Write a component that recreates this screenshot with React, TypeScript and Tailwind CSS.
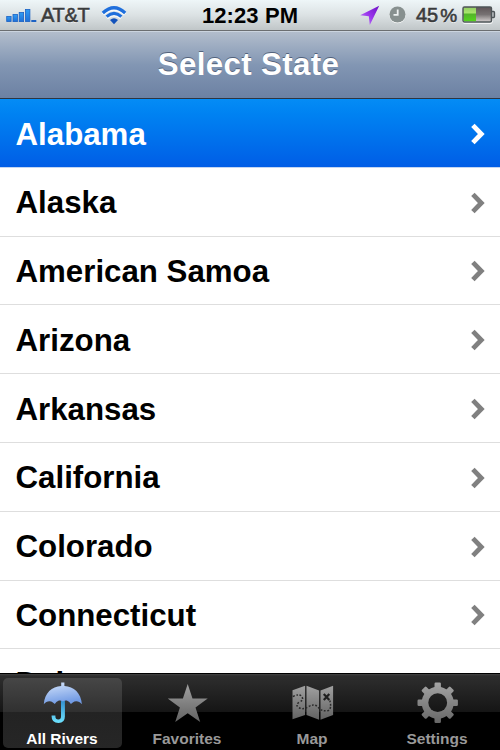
import React, { useState } from 'react';

const STATES = [
  'Alabama',
  'Alaska',
  'American Samoa',
  'Arizona',
  'Arkansas',
  'California',
  'Colorado',
  'Connecticut',
  'Delaware',
];

const SignalIcon = () => (
  <svg width="32" height="16" viewBox="0 0 32 16" className="relative top-px shrink-0">
    <defs>
      <linearGradient id="signal" x1="0" y1="0" x2="0" y2="1">
        <stop offset="0" stopColor="#2f9df4" />
        <stop offset="1" stopColor="#1d6fd8" />
      </linearGradient>
    </defs>
    <g fill="url(#signal)" stroke="#1c62c4" strokeWidth="0.8">
      <rect x="0.7" y="8.4" width="4.4" height="5.2" />
      <rect x="7" y="6.4" width="4.4" height="7.2" />
      <rect x="13.2" y="4.4" width="4.4" height="9.2" />
      <rect x="19.5" y="1.4" width="4.4" height="12.2" />
    </g>
    <rect x="25.3" y="12" width="5" height="2" fill="#1c62c4" />
  </svg>
);

const WifiIcon = () => (
  <svg width="26" height="20" viewBox="0 0 26 20" className="relative top-px shrink-0">
    <g transform="translate(0 1)" fill="none" stroke="#ffffff" strokeWidth="3.2" opacity="0.8">
      <path d="M2 7.4Q13 -2.8 24 7.4" />
      <path d="M5.8 11Q13 4.6 20.2 11" />
    </g>
    <g fill="none" stroke="#1f6fdc" strokeWidth="3.2">
      <path d="M1.8 7Q13 -3.4 24.2 7" />
      <path d="M5.6 10.6Q13 4.2 20.4 10.6" />
    </g>
    <path d="M9 14Q13 10.6 17 14L13 18.2Z" fill="#1252bb" />
  </svg>
);

const LocationIcon = () => (
  <svg width="20" height="20" viewBox="0 0 20 20" className="shrink-0">
    <defs>
      <linearGradient id="arrow" x1="1" y1="0" x2="0" y2="1">
        <stop offset="0" stopColor="#6d10c4" />
        <stop offset="0.5" stopColor="#9935ec" />
        <stop offset="1" stopColor="#c58bf8" />
      </linearGradient>
    </defs>
    <path d="M19.2 0.8L9.8 20L8.8 11.2L0.2 10.2Z" fill="url(#arrow)" />
  </svg>
);

const ClockIcon = () => (
  <svg width="17" height="18" viewBox="0 0 17 18" className="shrink-0">
    <circle cx="8.5" cy="9.3" r="8" fill="#ffffff" />
    <circle cx="8.5" cy="8.5" r="8" fill="#87908f" />
    <path d="M8.7 3.5V8.8H4.5" fill="none" stroke="#edf1f1" strokeWidth="1.8" />
  </svg>
);

const BatteryIcon = () => (
  <svg width="34" height="18" viewBox="0 0 34 18" className="shrink-0">
    <defs>
      <linearGradient id="charge" x1="0" y1="0" x2="0" y2="1">
        <stop offset="0" stopColor="#95cf65" />
        <stop offset="0.35" stopColor="#a7e46c" />
        <stop offset="0.5" stopColor="#54b52a" />
        <stop offset="1" stopColor="#55d51d" />
      </linearGradient>
      <linearGradient id="empty" x1="0" y1="0" x2="0" y2="1">
        <stop offset="0" stopColor="#5e5557" />
        <stop offset="0.5" stopColor="#777273" />
        <stop offset="1" stopColor="#d5d0d0" />
      </linearGradient>
    </defs>
    <rect x="1" y="2" width="29" height="15" rx="1.5" fill="none" stroke="#ffffff" strokeWidth="1.4" />
    <rect x="1" y="1" width="28.5" height="15" rx="1.5" fill="url(#empty)" stroke="#4d5558" strokeWidth="1.5" />
    <rect x="1.8" y="1.8" width="12.2" height="13.4" fill="url(#charge)" />
    <path d="M30 5.5H31.5Q32.5 5.5 32.5 6.5V10.5Q32.5 11.5 31.5 11.5H30" fill="#a7adb0" stroke="#4d5558" strokeWidth="1.3" />
  </svg>
);

const Chevron = ({ selected }: { selected: boolean }) => (
  <svg width="14" height="22" viewBox="0 0 14 22" className="shrink-0">
    <path
      d="M1.9 2.4L10.3 11L1.9 19.6"
      fill="none"
      stroke={selected ? '#ffffff' : '#808080'}
      strokeWidth="4.8"
    />
  </svg>
);

const UmbrellaIcon = () => (
  <svg width="42" height="44" viewBox="0 0 42 44">
    <defs>
      <linearGradient id="canopy" x1="0" y1="0" x2="0.3" y2="1">
        <stop offset="0" stopColor="#d6e5fb" />
        <stop offset="1" stopColor="#729be4" />
      </linearGradient>
      <linearGradient id="handle" x1="0" y1="0" x2="0" y2="1">
        <stop offset="0" stopColor="#318ccb" />
        <stop offset="1" stopColor="#6ee3ff" />
      </linearGradient>
    </defs>
    <path
      d="M19 18H22.9V34.5Q22.9 41 16.5 41Q9.6 41 9.6 34.5V33.5H13.4V34.5Q13.4 37.4 16.3 37.4Q19 37.4 19 34.5Z"
      fill="url(#handle)"
    />
    <path
      d="M19.2 0.5H22.4V4C31.8 4.6 39.2 11 39.9 22.2C37.5 19 33.4 18.4 30.8 20.4L28.9 22L27.3 20C25.3 17.9 22.8 18 20.9 19.6C19 18 16.4 17.9 14.4 20L12.8 22L10.9 20.4C8.3 18.4 4.2 19 1.8 22.2C2.5 11 9.9 4.6 19.2 4Z"
      fill="url(#canopy)"
    />
  </svg>
);

const GreyGradient = ({ id }: { id: string }) => (
  <defs>
    <linearGradient id={id} x1="0" y1="0" x2="0" y2="1">
      <stop offset="0" stopColor="#a0a0a0" />
      <stop offset="1" stopColor="#626262" />
    </linearGradient>
  </defs>
);

const StarIcon = () => (
  <svg width="42" height="44" viewBox="0 0 42 44">
    <GreyGradient id="star" />
    <path
      d="M20.7 2L25.5 16.4H40.7L28.5 25.6L33.2 40.1L20.7 31.2L8.2 40.1L12.9 25.6L0.7 16.4H15.9Z"
      fill="url(#star)"
    />
  </svg>
);

const MapIcon = () => (
  <svg width="42" height="44" viewBox="0 0 42 44">
    <GreyGradient id="map" />
    <path
      d="M0.5 8.2L13.1 3.8V33L0.5 37.3ZM14.5 3.8L27.1 8.4V37.8L14.5 33.1ZM28.5 8.4L41.1 3.8V33.1L28.5 37.8Z"
      fill="url(#map)"
    />
    <path
      d="M0.8 14.5Q8 11 10 15Q12 18 7.5 20Q3 23 6.5 25.5Q11 28 16 25Q22 21 26 25Q30 30 36.3 28.5Q40 26.5 37.8 18.5"
      fill="none"
      stroke="#2b2b2b"
      strokeWidth="1.5"
      strokeDasharray="1.8 1.6"
    />
    <path d="M31.8 12L37.3 18M37.3 12L31.8 18" stroke="#202020" strokeWidth="2.2" />
  </svg>
);

const TEETH = [0, 45, 90, 135, 180, 225, 270, 315];

const GearIcon = () => (
  <svg width="42" height="44" viewBox="0 0 42 44">
    <defs>
      <linearGradient id="gear" x1="0" y1="0" x2="0" y2="44" gradientUnits="userSpaceOnUse">
        <stop offset="0" stopColor="#a5a5a5" />
        <stop offset="1" stopColor="#626262" />
      </linearGradient>
      <mask id="gearShape">
        <circle cx="20.7" cy="20.7" r="16" fill="white" />
        {TEETH.map((angle) => (
          <rect
            key={angle}
            x="17.5"
            y="0.5"
            width="6.4"
            height="8"
            rx="1.2"
            fill="white"
            transform={`rotate(${angle} 20.7 20.7)`}
          />
        ))}
        <circle cx="20.7" cy="20.7" r="9.4" fill="black" />
      </mask>
    </defs>
    <rect width="42" height="44" fill="url(#gear)" mask="url(#gearShape)" />
  </svg>
);

const TABS = [
  { label: 'All Rivers', icon: <UmbrellaIcon /> },
  { label: 'Favorites', icon: <StarIcon /> },
  { label: 'Map', icon: <MapIcon /> },
  { label: 'Settings', icon: <GearIcon /> },
];

const StatusBar = () => (
  <div className="h-[31px] shrink-0 grid grid-cols-[1fr_auto_1fr] items-center border-b border-[#6b6e71] bg-linear-to-b from-[#eef6f8] via-[#dce2e4] to-[#c0c6c8] px-[6px] text-[22px] font-bold leading-[30px]">
    <div className="flex items-center">
      <SignalIcon />
      <span className="ml-[3px] mt-px w-[49px] whitespace-nowrap text-[20px] leading-[29px] font-normal tracking-[-0.3px] text-[#393b3c] [-webkit-text-stroke:0.6px_#393b3c] [text-shadow:0_1px_0_#fff]">AT&amp;T</span>
      <span className="ml-[11px]"><WifiIcon /></span>
    </div>
    <span className="mt-px leading-[29px] text-black tracking-[0.1px]">12:23 PM</span>
    <div className="flex items-center justify-end">
      <LocationIcon />
      <span className="ml-[9px]"><ClockIcon /></span>
      <span className="ml-[10px] mt-px flex w-[42px] text-[20px] leading-[29px] font-normal text-[#393b3c] [-webkit-text-stroke:0.6px_#393b3c] [text-shadow:0_1px_0_#fff]">
        45<span className="ml-[2px] text-[19px]">%</span>
      </span>
      <span className="ml-[4px] -mr-[2px]"><BatteryIcon /></span>
    </div>
  </div>
);

const App: React.FC = () => {
  const [selected, setSelected] = useState('Alabama');
  const [activeTab, setActiveTab] = useState('All Rivers');

  return (
    <div className="w-[500px] h-[750px] flex flex-col overflow-hidden bg-white font-['Liberation_Sans',Arial,sans-serif]">
      <StatusBar />

      <header className="h-[68px] shrink-0 flex items-center justify-center border-t border-t-[#cbd4df] border-b border-b-[#2d3642] bg-linear-to-b from-[#b2bdcc] via-[#8296b3] to-[#6c81a3]">
        <h1 className="-ml-[3px] text-[31.25px] leading-9 font-bold text-white tracking-[0.35px] [text-shadow:0_-1px_0_#52627b]">Select State</h1>
      </header>

      <ul className="flex-1 min-h-0 overflow-hidden">
        {STATES.map((name) => {
          const isSelected = name === selected;
          return (
            <li
              key={name}
              onClick={() => setSelected(name)}
              className={`h-[68.8px] flex items-center justify-between border-b pl-[15.5px] pr-[15px] pt-[2px] last:pt-0 first:pt-[3px] ${
                isSelected
                  ? 'border-[#c3d5f2] bg-linear-to-b from-[#058cf5] to-[#015de6] text-white'
                  : 'border-[#dedede] text-black'
              }`}
            >
              <span className="pt-px text-[31.25px] leading-9 font-bold">{name}</span>
              <Chevron selected={isSelected} />
            </li>
          );
        })}
      </ul>

      {/* Tab bar */}
      <nav className="h-[77px] shrink-0 grid grid-cols-4 border-t border-black bg-[linear-gradient(#434343_0px,#2e2e2e_2px,#151515_38px,#000_38px)]">
        {TABS.map((tab) => {
          const isActive = tab.label === activeTab;
          return (
            <button
              key={tab.label}
              onClick={() => setActiveTab(tab.label)}
              className={`mx-[3px] mt-[4px] mb-[2px] flex flex-col items-center rounded-[5px] pt-[4px] ${
                isActive
                  ? 'bg-[linear-gradient(#464646_0px,#303030_34px,#232323_34px,#262626_70px)] text-white'
                  : 'text-[#999]'
              }`}
            >
              {tab.icon}
              <span className="mt-[4px] mr-px text-[15.5px] leading-[18px] font-bold whitespace-nowrap">{tab.label}</span>
            </button>
          );
        })}
      </nav>
    </div>
  );
};

export default App;
